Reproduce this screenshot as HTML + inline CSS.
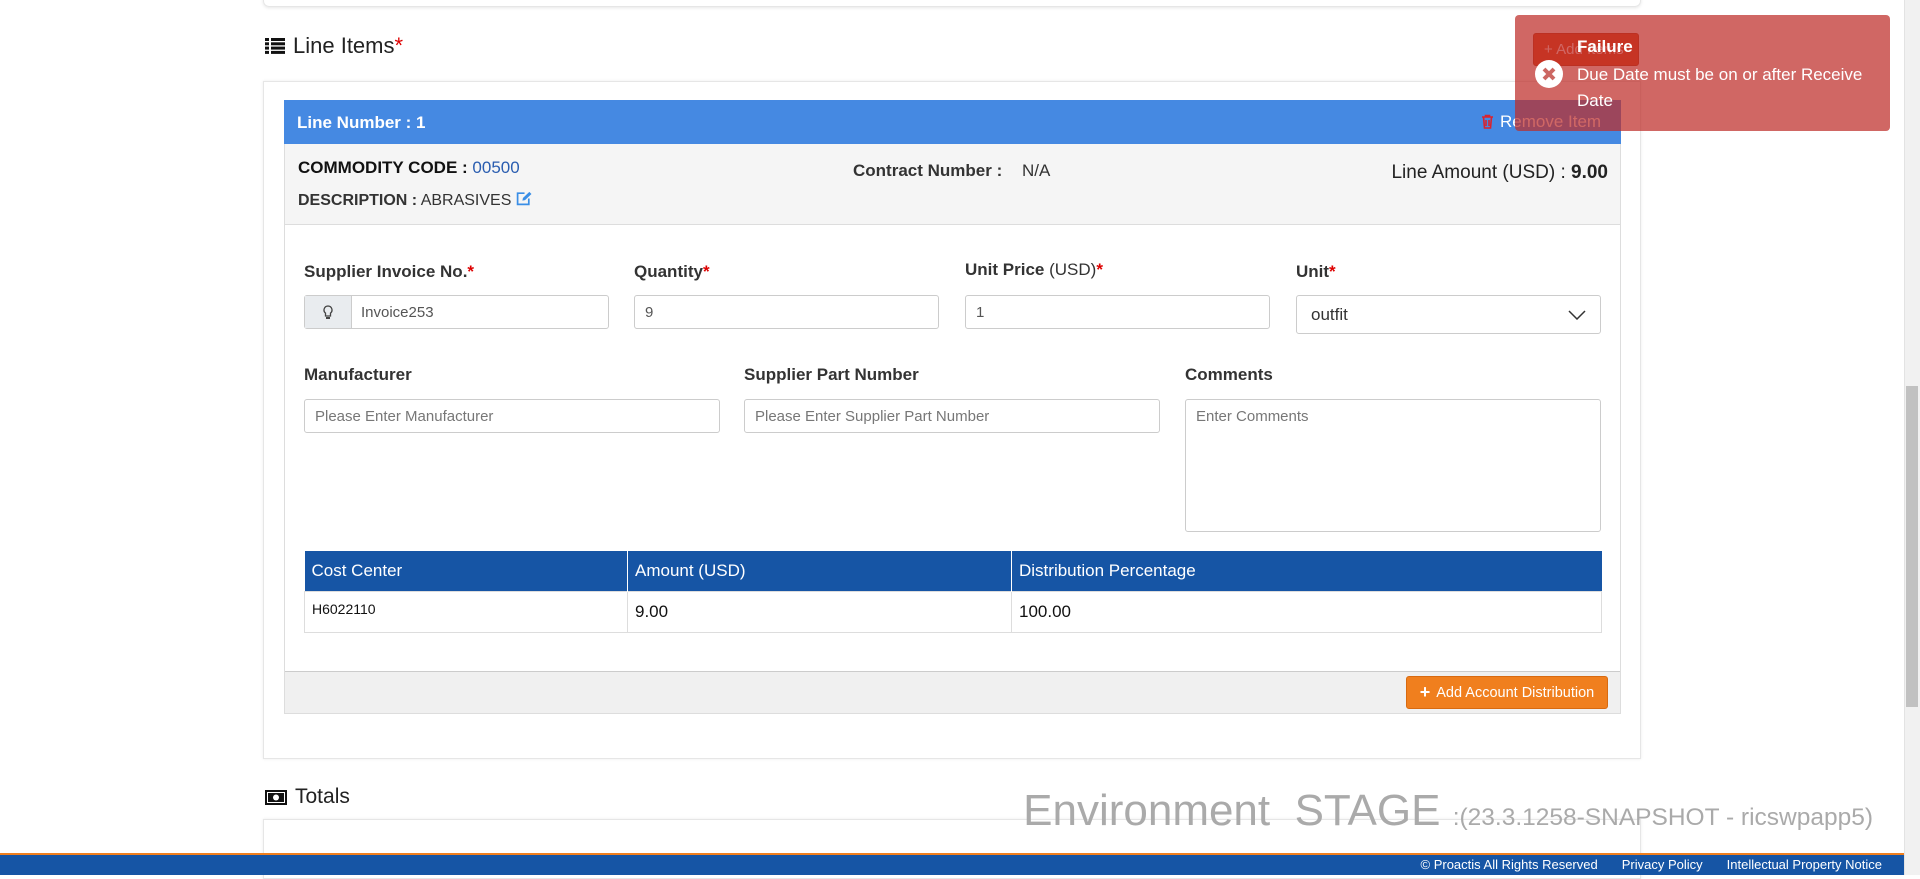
<!DOCTYPE html>
<html><head><meta charset="utf-8"><style>
*{box-sizing:border-box;margin:0;padding:0}
body{width:1920px;height:875px;overflow:hidden;background:#fff;font-family:"Liberation Sans",Arial,sans-serif;position:relative;color:#333}
.a{position:absolute}
.lbl{font-weight:bold;font-size:17px;color:#333}
.req{color:#d00}
.inp{position:absolute;border:1px solid #ccc;border-radius:3px;background:#fff;font-size:15px;color:#555;padding:0 10px;display:flex;align-items:center}
.ph{color:#777}
th,td{text-align:left}
</style></head><body>
<div class="a" style="left:263px;top:-10px;width:1378px;height:17px;border:1px solid #e6e6e6;border-radius:6px;box-shadow:0 1px 3px rgba(0,0,0,.1)"></div>
<div class="a" style="left:265px;top:33px;font-size:22px;color:#222;display:flex;align-items:center">
<svg width="20" height="16" viewBox="0 0 20 16" style="margin-right:8px"><g fill="#111"><rect x="0" y="0" width="4" height="3"/><rect x="6" y="0" width="14" height="3"/><rect x="0" y="4.3" width="4" height="3"/><rect x="6" y="4.3" width="14" height="3"/><rect x="0" y="8.6" width="4" height="3"/><rect x="6" y="8.6" width="14" height="3"/><rect x="0" y="12.9" width="4" height="3"/><rect x="6" y="12.9" width="14" height="3"/></g></svg>Line Items<span class="req">*</span></div>
<div class="a" style="left:263px;top:81px;width:1378px;height:678px;border:1px solid #e6e6e6;box-shadow:0 0 3px rgba(0,0,0,.08)"></div>
<div class="a" style="left:284px;top:100px;width:1337px;height:614px;border:1px solid #ddd"></div>
<div class="a" style="left:284px;top:100px;width:1337px;height:44px;background:#4589e2;color:#fff;font-weight:bold;font-size:17px;padding:13px 13px"><span>Line Number : 1</span>
<span style="position:absolute;right:0;top:12px;font-weight:normal;font-size:17px;color:#fff;width:140px">
<svg width="13" height="15" viewBox="0 0 13 15" style="vertical-align:-2px;margin-right:6px"><path d="M1 3h11M4.5 3V1.5h4V3M2.5 3l1 11h6l1-11M5 6v6M8 6v6" stroke="#d9232e" stroke-width="1.6" fill="none"/></svg>Remove Item</span></div>
<div class="a" style="left:285px;top:144px;width:1335px;height:81px;background:#f5f5f5;border-bottom:1px solid #ddd"></div>
<div class="a" style="left:298px;top:158px;font-size:17px;font-weight:bold;color:#111">COMMODITY CODE : <span style="font-weight:normal;color:#2a5db0">00500</span></div>
<div class="a" style="left:298px;top:191px;font-size:16px;color:#333"><b>DESCRIPTION :</b> ABRASIVES <svg width="16" height="15" viewBox="0 0 15 14" style="vertical-align:-1px"><path d="M8 2H1.5v10.5H12V7" stroke="#3a8ee6" stroke-width="1.6" fill="none"/><path d="M6 9l.5-2.5L12.5.8l2 2L8.5 8.5z" fill="#3a8ee6"/></svg></div>
<div class="a" style="left:853px;top:161px;font-size:17px;color:#333"><b>Contract Number :</b></div>
<div class="a" style="left:1022px;top:161px;font-size:17px;color:#333">N/A</div>
<div class="a" style="right:312px;top:162px;font-size:19px;color:#222">Line Amount (USD) : <b>9.00</b></div>

<div class="a lbl" style="left:304px;top:262px">Supplier Invoice No.<span class="req">*</span></div>
<div class="a lbl" style="left:634px;top:262px">Quantity<span class="req">*</span></div>
<div class="a lbl" style="left:965px;top:260px">Unit Price <span style="font-weight:normal">(USD)</span><span class="req">*</span></div>
<div class="a lbl" style="left:1296px;top:262px">Unit<span class="req">*</span></div>
<div class="inp" style="left:304px;top:295px;width:305px;height:34px;padding:0">
<div style="width:47px;height:100%;background:#e9ecef;border-right:1px solid #ccc;display:flex;align-items:center;justify-content:center"><svg width="10" height="15" viewBox="0 0 10 15"><path d="M5 1a4 4 0 0 0-2.5 7.1V11h5V8.1A4 4 0 0 0 5 1z" stroke="#444" stroke-width="1.3" fill="none"/><rect x="3" y="12" width="4" height="2" fill="#444"/></svg></div>
<span style="padding-left:9px">Invoice253</span></div>
<div class="inp" style="left:634px;top:295px;width:305px;height:34px">9</div>
<div class="inp" style="left:965px;top:295px;width:305px;height:34px">1</div>
<div class="inp" style="left:1296px;top:295px;width:305px;height:39px;font-size:17px;color:#333;justify-content:space-between;padding:0 14px">outfit<svg width="18" height="10" viewBox="0 0 18 10"><path d="M1 1l8 8 8-8" stroke="#333" stroke-width="1.5" fill="none"/></svg></div>

<div class="a lbl" style="left:304px;top:365px">Manufacturer</div>
<div class="a lbl" style="left:744px;top:365px">Supplier Part Number</div>
<div class="a lbl" style="left:1185px;top:365px">Comments</div>
<div class="inp ph" style="left:304px;top:399px;width:416px;height:34px">Please Enter Manufacturer</div>
<div class="inp ph" style="left:744px;top:399px;width:416px;height:34px">Please Enter Supplier Part Number</div>
<div class="inp ph" style="left:1185px;top:399px;width:416px;height:133px;align-items:flex-start;padding-top:8px">Enter Comments</div>

<table class="a" style="left:304px;top:551px;width:1298px;border-collapse:collapse;font-size:17px">
<tr style="background:#1655a5;color:#fff;height:40px"><th style="width:323px;font-weight:normal;padding-left:7px">Cost Center</th><th style="width:384px;font-weight:normal;padding-left:7px;border-left:1px solid #fff">Amount (USD)</th><th style="font-weight:normal;padding-left:7px;border-left:1px solid #fff">Distribution Percentage</th></tr>
<tr style="height:41px;color:#111"><td style="border:1px solid #ddd;padding-left:7px;font-size:14px;vertical-align:top;padding-top:9px">H6022110</td><td style="border:1px solid #ddd;padding-left:7px">9.00</td><td style="border:1px solid #ddd;padding-left:7px">100.00</td></tr>
</table>
<div class="a" style="left:285px;top:671px;width:1335px;height:42px;background:#f0f0f0;border-top:1px solid #ccc"></div>
<div class="a" style="left:1406px;top:676px;width:202px;height:33px;background:#f07f1e;border:1px solid #d86a10;border-radius:3px;color:#fff;font-size:14.5px;display:flex;align-items:center;justify-content:center"><b style="font-size:18px;margin-right:6px">+</b>Add Account Distribution</div>

<div class="a" style="left:265px;top:785px;font-size:21px;color:#222;display:flex;align-items:center"><svg width="22" height="15" viewBox="0 0 22 15" style="margin-right:8px"><rect x="1" y="1" width="20" height="13" fill="none" stroke="#111" stroke-width="2"/><rect x="3" y="3" width="16" height="9" fill="#111"/><circle cx="11" cy="7.5" r="3" fill="#fff"/></svg>Totals</div>
<div class="a" style="left:263px;top:819px;width:1378px;height:60px;border:1px solid #e6e6e6;box-shadow:0 0 3px rgba(0,0,0,.08)"></div>
<div class="a" style="right:47px;top:786px;color:#aaa;font-size:44px;white-space:nowrap">Environment&nbsp; STAGE <span style="font-size:24.5px">:(23.3.1258-SNAPSHOT - ricswpapp5)</span></div>
<div class="a" style="left:0;top:853px;width:1904px;height:22px;background:#1655a5;border-top:2px solid #f07f1e;color:#fff;font-size:13px;text-align:right;padding:2px 22px 0 0;white-space:nowrap">© Proactis All Rights Reserved<span style="margin-left:24px">Privacy Policy</span><span style="margin-left:24px">Intellectual Property Notice</span></div>
<div class="a" style="left:1904px;top:0;width:16px;height:875px;background:#f1f1f1;border-left:1px solid #e3e3e3"></div>
<div class="a" style="left:1906px;top:386px;width:12px;height:321px;background:#c1c1c1"></div>

<div class="a" style="left:1533px;top:33px;width:106px;height:33px;background:#d9481c;border:1px solid #b83a12;border-radius:3px;color:#fff;font-size:15px;padding:7px 10px">+ Add Items</div>
<div class="a" style="left:1515px;top:15px;width:375px;height:116px;background:rgba(190,45,40,.72);border-radius:4px;color:#fff">
<svg width="30" height="30" viewBox="0 0 30 30" style="position:absolute;left:19px;top:44px"><circle cx="15" cy="15" r="14" fill="#fff"/><path d="M10 10l10 10M20 10L10 20" stroke="#cc6762" stroke-width="4"/></svg>
<div style="position:absolute;left:62px;top:22px;font-weight:bold;font-size:17px">Failure</div>
<div style="position:absolute;left:62px;top:47px;font-size:17px;line-height:26px;width:300px">Due Date must be on or after Receive Date</div>
</div>
</body></html>
